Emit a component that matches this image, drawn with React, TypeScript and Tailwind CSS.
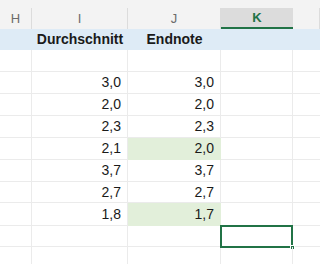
const cols = ['H', 'I', 'J', 'K', ''];
const widths = ['w-[32px]', 'w-[96px]', 'w-[93px]', 'w-[72px]', 'w-[27px]'];

const rows: { h: string; i?: string; j?: string; hl?: boolean; sel?: boolean }[] = [
  { h: 'h-[22px]' },
  { h: 'h-[22px]', i: '3,0', j: '3,0' },
  { h: 'h-[22px]', i: '2,0', j: '2,0' },
  { h: 'h-[22px]', i: '2,3', j: '2,3' },
  { h: 'h-[22px]', i: '2,1', j: '2,0', hl: true },
  { h: 'h-[22px]', i: '3,7', j: '3,7' },
  { h: 'h-[21px]', i: '2,7', j: '2,7' },
  { h: 'h-[23px]', i: '1,8', j: '1,7', hl: true },
  { h: 'h-[21px]', sel: true },
  { h: 'h-[21px]' },
];

export default function App() {
  return (
    <div className="w-[320px] h-[264px] overflow-hidden bg-white text-[#1a1a1a] font-['Liberation_Sans',Arial,sans-serif]">
      {/* column headers */}
      <div className="flex h-[29px] bg-[#f3f3f3]">
        {cols.map((c, n) => (
          <div key={n} className={`${widths[n]} flex items-end`}>
            <div
              className={
                c === 'K'
                  ? 'w-full h-[21px] bg-[#dcdcdc] border-b-2 border-[#217346] flex items-center justify-center text-[13px] font-bold text-[#217346]'
                  : 'w-full h-[21px] border-r border-[#dcdcdc] flex items-center justify-center text-[13px] text-[#6b6b6b]'
              }
            >
              {c}
            </div>
          </div>
        ))}
      </div>

      {/* title row */}
      <div className="flex h-[21px] bg-[#deebf6] text-[14px] font-bold">
        <div className="w-[32px]" />
        <div className="w-[96px] flex items-center justify-center">Durchschnitt</div>
        <div className="w-[93px] flex items-center justify-center">Endnote</div>
        <div className="w-[72px]" />
        <div className="w-[27px]" />
      </div>

      {rows.map((r, idx) => (
        <div key={idx} className={`flex ${r.h} text-[14px]`}>
          <div className="w-[32px] border-r border-b border-[#ebebeb]" />
          <div className="w-[96px] border-r border-b border-[#ebebeb] flex items-center justify-end pr-[6px]">
            {r.i}
          </div>
          <div
            className={`w-[93px] border-r border-b flex items-center justify-end pr-[6px] ${
              r.hl ? 'bg-[#e2efda] border-[#e2efda]' : 'border-[#ebebeb]'
            }`}
          >
            {r.j}
          </div>
          <div className="w-[72px] border-r border-b border-[#ebebeb] relative">
            {r.sel && (
              <div className="absolute -left-[1px] -top-[1px] w-[73px] h-[23px] border-2 border-[#217346]">
                <div className="absolute -right-[4px] -bottom-[4px] w-[5px] h-[5px] bg-[#217346] border border-white" />
              </div>
            )}
          </div>
          <div className="w-[27px] border-b border-[#ebebeb]" />
        </div>
      ))}
    </div>
  );
}
